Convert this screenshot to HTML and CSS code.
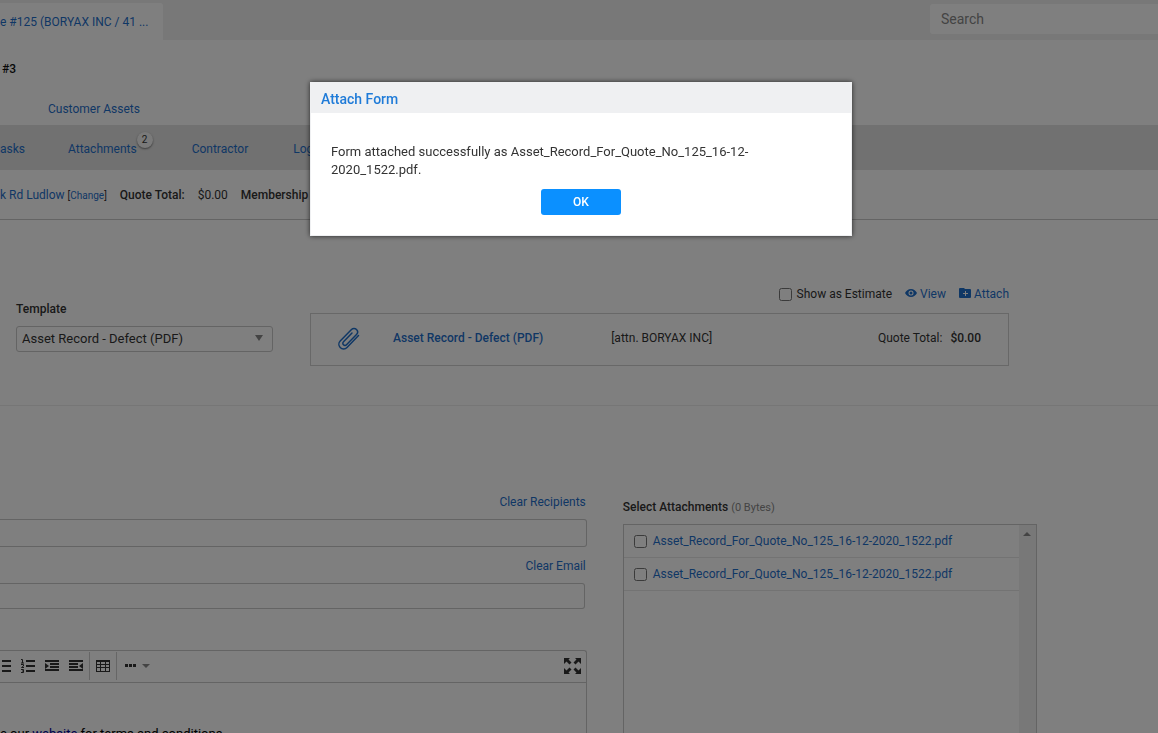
FILE: index.html
```html
<!DOCTYPE html>
<html lang="en">
<head>
  <meta charset="UTF-8">
  <meta name="viewport" content="width=device-width, initial-scale=1.0">
  <title>Quote #125</title>
  <link rel="stylesheet" href="styles.css">
</head>
<body>
  <div class="page">
    <header class="topbar">
      <a class="tab" href="#">e #125 (BORYAX INC / 41 ...</a>
      <input class="search" type="search" placeholder="Search" aria-label="Search">
    </header>

    <h1 class="title">#3</h1>
    <nav class="subnav">
      <a href="#">Customer Assets</a>
    </nav>
    <nav class="nav">
      <a href="#">asks</a>
      <a class="with-badge" href="#">Attachments<span class="badge">2</span></a>
      <a href="#">Contractor</a>
      <a href="#">Logs</a>
    </nav>

    <div class="info">
      <span><a href="#">k Rd Ludlow</a> <small>[<a href="#">Change</a>]</small></span>
      <b>Quote Total:</b>
      <span>$0.00</span>
      <b>Membership</b>
    </div>

    <section class="preview">
      <div class="template">
        <label for="template">Template</label>
        <div class="select">
          <select id="template">
            <option>Asset Record - Defect (PDF)</option>
          </select>
        </div>
      </div>
      <div class="form-side">
        <div class="actions">
          <label class="check"><input type="checkbox"> Show as Estimate</label>
          <a class="view" href="#">
            <svg width="12" height="14" viewBox="0 0 24 28"><path fill="currentColor" d="M12 4C6.500 4 2 7.500 0 12c2 4.500 6.500 8 12 8s10-3.500 12-8c-2-4.500-6.500-8-12-8zm0 13a5 5 0 1 1 0-10 5 5 0 0 1 0 10zm0-8a3 3 0 1 0 0 6 3 3 0 0 0 0-6z"/></svg>
            View
          </a>
          <a class="attach" href="#">
            <svg width="12" height="14" viewBox="0 0 12 14"><path fill="currentColor" fill-rule="evenodd" d="M1 1h4l1 1h5a1 1 0 0 1 1 1v7a1 1 0 0 1-1 1H1a1 1 0 0 1-1-1V2a1 1 0 0 1 1-1zM6 4v2H4v1h2v2h1V7h2V6H7V4z"/></svg>
            Attach
          </a>
        </div>
        <div class="card">
          <svg class="clip" width="22" height="24" viewBox="0 0 22 24" fill="none" stroke="currentColor" stroke-width="1.500" stroke-linecap="round" stroke-linejoin="round"><path d="M20.500 8.500 9 20.500a4.600 4.600 0 0 1-6.800 0 4.700 4.700 0 0 1 0-6.500L13.500 2.500a3.500 3.500 0 0 1 5 0 3.600 3.600 0 0 1 0 5L8.500 17.700a2 2 0 0 1-3 0 2 2 0 0 1 0-3L14 6"/></svg>
          <a class="card-name" href="#">Asset Record - Defect (PDF)</a>
          <span class="attn">[attn. BORYAX INC]</span>
          <span class="total">Quote Total: <b>$0.00</b></span>
        </div>
      </div>
    </section>

    <section class="compose">
      <div class="mail">
        <a class="clear" href="#">Clear Recipients</a>
        <input class="field recipients" type="text" aria-label="Recipients">
        <a class="clear" href="#">Clear Email</a>
        <input class="field email" type="text" aria-label="Email">
        <div class="editor">
          <div class="toolbar">
            <button type="button" aria-label="Bulleted list">
              <svg width="9" height="14" viewBox="0 0 9 14"><path fill="currentColor" d="M0 1h9v2H0zM0 6h9v2H0zM0 11h9v2H0z"/></svg>
            </button>
            <button type="button" aria-label="Numbered list">
              <svg width="14" height="14" viewBox="0 0 14 14"><path fill="currentColor" d="M5 1h9v2H5zM5 6h9v2H5zM5 11h9v2H5z"/><path fill="none" stroke="currentColor" d="M0 .5h1.500V4M0 4h3M0 5.500h2.500V7L.5 8.500H3M0 10.500h2.500v3H0M1 12h1.500"/></svg>
            </button>
            <button type="button" aria-label="Increase indent">
              <svg width="14" height="12" viewBox="0 0 14 12"><path fill="currentColor" d="M0 0h14v2H0zM5 3h9v2H5zM5 6h9v2H5zM0 9h14v2H0zM0 3l4 3-4 3z"/></svg>
            </button>
            <button type="button" aria-label="Decrease indent">
              <svg width="14" height="12" viewBox="0 0 14 12"><path fill="currentColor" d="M0 0h14v2H0zM0 3h9v2H0zM0 6h9v2H0zM0 9h14v2H0zM14 3v6l-4-3z"/></svg>
            </button>
            <span class="sep"></span>
            <button type="button" aria-label="Table">
              <svg width="14" height="12" viewBox="0 0 14 12"><path fill="currentColor" fill-rule="evenodd" d="M0 0h14v12H0zM1 2v2h3V2zM5 2v2h4V2zM10 2v2h3V2zM1 5v2h3V5zM5 5v2h4V5zM10 5v2h3V5zM1 8v3h3V8zM5 8v3h4V8zM10 8v3h3V8z"/></svg>
            </button>
            <span class="sep"></span>
            <button class="more" type="button" aria-label="More">
              <svg width="26" height="4" viewBox="0 0 26 4"><path fill="currentColor" d="M1 0h3v3H1zM5 0h3v3H5zM9 0h3v3H9z"/><path fill="#888" d="M18 0h8l-4 4z"/></svg>
            </button>
            <button class="expand" type="button" aria-label="Full screen">
              <svg width="17" height="16" viewBox="0 0 17 16"><path fill="currentColor" d="M0 0h6L4.500 1.500l3 3-2 2-3-3L0 6zM17 0v6l-2.500-2.500-3 3-2-2 3-3L11 0zM0 16v-6l2.500 2.500 3-3 2 2-3 3L6 16zM17 16h-6l1.500-1.500-3-3 2-2 3 3L17 10z"/></svg>
            </button>
          </div>
          <p class="content">e our <a href="#">website</a> for terms and conditions.</p>
        </div>
      </div>

      <div class="attachments">
        <h2>Select Attachments <small>(0 Bytes)</small></h2>
        <div class="file-box">
          <ul class="files">
            <li><input type="checkbox" aria-label="Select file 1"><a href="#">Asset_Record_For_Quote_No_125_16-12-2020_1522.pdf</a></li>
            <li><input type="checkbox" aria-label="Select file 2"><a href="#">Asset_Record_For_Quote_No_125_16-12-2020_1522.pdf</a></li>
          </ul>
          <div class="scrollbar"><span class="arrow-up"></span></div>
        </div>
      </div>
    </section>
  </div>

  <div class="overlay">
    <div class="modal" role="dialog" aria-labelledby="modal-title">
      <h2 id="modal-title">Attach Form</h2>
      <div class="modal-body">
        <p>Form attached successfully as Asset_Record_For_Quote_No_125_16-12-2020_1522.pdf.</p>
        <button type="button">OK</button>
      </div>
    </div>
  </div>
</body>
</html>
```
FILE: styles.css
```css
* {
  box-sizing: border-box;
}
body {
  margin: 0;
  background: #fff;
  color: #333;
  font: 12px/16px Roboto, "Liberation Sans", sans-serif;
}
h1, h2, p, ul {
  margin: 0;
  padding: 0;
}
a {
  color: #1f6fcb;
  text-decoration: none;
}
b {
  font-weight: 500;
}
input, select, button {
  font: inherit;
  color: inherit;
}
svg {
  display: block;
  flex: none;
}
input[type="checkbox"] {
  width: 13px;
  height: 13px;
  margin: 0;
}
.page {
  height: 100vh;
  display: flex;
  flex-direction: column;
  overflow: hidden;
}

/* header */
.topbar {
  height: 40px;
  flex: none;
  display: flex;
  justify-content: space-between;
  align-items: flex-end;
  background: #f0f0f0;
}
.tab {
  width: 163px;
  height: 37px;
  line-height: 38px;
  background: #fff;
  border-radius: 0 3px 0 0;
}
.search {
  width: 228px;
  height: 30px;
  margin-bottom: 6px;
  padding: 0 11px;
  border: 0;
  border-radius: 3px 0 0 3px;
  background: #fff;
  font-size: 14px;
}
.search::placeholder {
  color: #888;
}
.title {
  padding: 21px 2px 0;
  font-size: 12px;
  font-weight: 500;
  color: #111;
}
.subnav {
  padding: 24px 48px 8px;
}
.nav {
  height: 45px;
  flex: none;
  display: flex;
  align-items: center;
  gap: 45px;
  padding-top: 2px;
  background: #e2e2e2;
}
.nav a:first-child {
  margin-right: -2px;
}
.with-badge {
  position: relative;
  margin-right: 10px;
}
.badge {
  position: absolute;
  left: 100%;
  top: -9px;
  width: 16px;
  height: 16px;
  border-radius: 8px;
  background: #f4f4f4;
  box-shadow: 0 1px 2px #777;
  color: #333;
  font-size: 10px;
  text-align: center;
}
.info {
  height: 50px;
  flex: none;
  display: flex;
  align-items: center;
  gap: 13px;
  border-bottom: 1px solid #c8c8c8;
  white-space: nowrap;
}
.info small {
  font-size: 10px;
  line-height: 12px;
}

/* template and form preview */
.preview {
  display: grid;
  grid-template-columns: 257px 1fr;
  gap: 37px;
  padding: 66px 149px 39px 16px;
  border-bottom: 1px solid #ececec;
}
.template {
  padding-top: 15px;
}
.template label {
  display: block;
  margin-bottom: 9px;
  font-weight: 500;
}
.select {
  position: relative;
}
.select::after {
  content: "";
  position: absolute;
  right: 10px;
  top: 9px;
  border: 4px solid transparent;
  border-top: 6px solid #888;
  border-bottom: 0;
}
.select select {
  width: 100%;
  height: 26px;
  padding: 0 5px;
  border: 1px solid #c8c8c8;
  border-radius: 3px;
  background: #fff;
  appearance: none;
  font-size: 13px;
}
.actions {
  display: flex;
  justify-content: flex-end;
  margin-bottom: 11px;
}
.actions label, .actions a {
  display: flex;
  align-items: center;
}
.check {
  gap: 5px;
}
.view, .attach {
  gap: 3px;
  margin-left: 13px;
}
.card {
  height: 53px;
  display: flex;
  align-items: center;
  padding: 0 27px 4px;
  border: 1px solid #d0d0d0;
}
.clip {
  margin-top: 3px;
  color: #1f6fcb;
}
.card-name {
  margin-left: 33px;
  font-weight: 500;
}
.attn {
  margin-left: 68px;
}
.total {
  margin-left: auto;
}
.total b {
  margin-left: 5px;
}

/* compose */
.compose {
  flex: 1;
  min-height: 0;
  display: grid;
  grid-template-columns: 17fr 12fr;
  gap: 36px;
  padding: 88px 121px 0 0;
}
.mail {
  display: flex;
  flex-direction: column;
  min-height: 0;
}
.clear {
  align-self: flex-end;
  margin-right: 1px;
}
.field {
  flex: none;
  border: 1px solid #c8c8c8;
  border-left: 0;
  border-radius: 0 3px 3px 0;
  background: #fff;
}
.recipients {
  height: 28px;
  margin: 9px 0 11px;
}
.email {
  height: 26px;
  margin: 9px 2px 41px 0;
}
.editor {
  flex: 1;
  min-height: 0;
  border: 1px solid #c8c8c8;
  border-width: 1px 1px 0 0;
  border-radius: 0 3px 0 0;
}
.toolbar {
  height: 32px;
  display: flex;
  align-items: center;
  padding-bottom: 1px;
  border-bottom: 1px solid #c8c8c8;
}
.toolbar button {
  width: 24px;
  height: 28px;
  padding: 0;
  border: 0;
  background: none;
  display: flex;
  align-items: center;
  justify-content: center;
}
.toolbar button:first-child {
  width: 16px;
  justify-content: flex-start;
  padding-left: 2px;
}
.sep {
  width: 1px;
  height: 28px;
  margin: 0 1px;
  background: #ccc;
}
.toolbar .more {
  width: 38px;
}
.toolbar .expand {
  margin-left: auto;
  margin-right: 1px;
}
.content {
  padding-top: 43px;
  font-size: 13px;
  color: #000;
}
.content a {
  color: #000099;
  text-decoration: underline;
}
.attachments {
  display: flex;
  flex-direction: column;
  padding-top: 5px;
  min-height: 0;
}
.attachments h2 {
  margin-bottom: 9px;
  font-size: 12px;
  font-weight: 500;
}
.attachments small {
  font-size: 11px;
  font-weight: 400;
  line-height: 12px;
  color: #888;
}
.file-box {
  flex: 1;
  display: flex;
  border: 1px solid #c8c8c8;
  border-bottom: 0;
}
.files {
  flex: 1;
  list-style: none;
}
.files li {
  height: 33px;
  display: flex;
  align-items: center;
  gap: 6px;
  padding-left: 10px;
  border-bottom: 1px solid #e6e6e6;
}
.scrollbar {
  width: 17px;
  padding: 7px 4px;
  background: #f1f1f1;
}
.arrow-up {
  display: block;
  width: 8px;
  border: 4px solid transparent;
  border-bottom-color: #888;
  border-top: 0;
}

/* dialog */
.overlay {
  position: fixed;
  inset: 0;
  display: flex;
  justify-content: center;
  align-items: flex-start;
  padding: 82px 0 0 4px;
  background: rgba(0, 0, 0, .5);
}
.modal {
  width: 542px;
  background: #fff;
  border: 1px solid #eff0f2;
  box-shadow: 0 0 5px rgba(0, 0, 0, .7);
}
.modal h2 {
  padding: 2px 10px 0;
  background: #eff0f2;
  color: #1f7bd8;
  font-size: 14px;
  font-weight: 500;
  line-height: 28px;
}
.modal-body {
  padding: 30px 20px 20px;
}
.modal-body p {
  font-size: 13px;
  line-height: 18px;
}
.modal-body button {
  display: block;
  width: 80px;
  height: 26px;
  margin: 10px auto 0;
  border: 0;
  border-radius: 3px;
  background: #0b90ff;
  color: #fff;
  font-weight: 500;
}
```
